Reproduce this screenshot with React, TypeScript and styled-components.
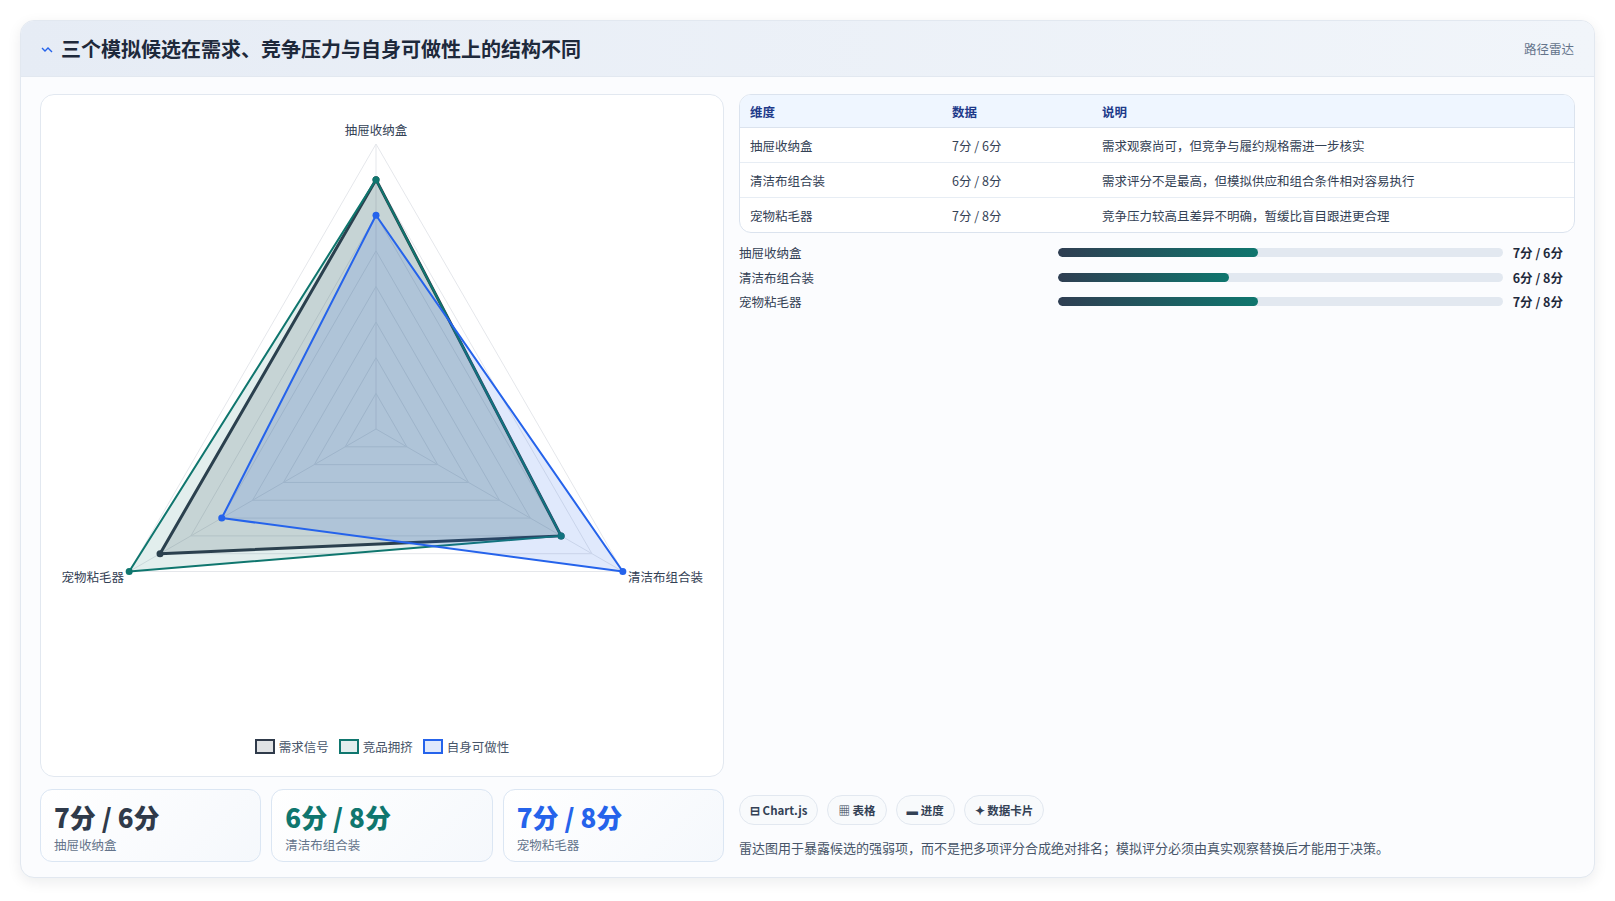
import styled, { createGlobalStyle } from "styled-components";

const GlobalStyle = createGlobalStyle`
  body {
    margin: 0;
    background: #ffffff;
    font-family: "Noto Sans CJK SC", "Noto Sans", sans-serif;
    color: #1e293b;
  }
`;

const Page = styled.div`
  padding: 20px;
  height: 901px;
  box-sizing: border-box;
`;

const Card = styled.div`
  width: 1575px;
  height: 858px;
  box-sizing: border-box;
  border: 1px solid #e2e8f0;
  border-radius: 14px;
  background: #fbfcfe;
  box-shadow: 0 4px 14px rgba(15, 23, 42, 0.08);
  display: flex;
  flex-direction: column;
  overflow: hidden;
`;

const Header = styled.div`
  height: 55px;
  flex-shrink: 0;
  display: flex;
  align-items: center;
  justify-content: space-between;
  padding: 0 20px;
  background: linear-gradient(90deg, #e6ecf5, #f1f5fa);
  border-bottom: 1px solid #e2e8f0;
`;

const Title = styled.h1`
  margin: 0;
  font-size: 20px;
  font-weight: 700;
  color: #1e293b;
  display: flex;
  align-items: center;
  gap: 8px;
`;

const Tag = styled.span`
  font-size: 12.5px;
  color: #64748b;
`;

const Body = styled.div`
  flex: 1;
  display: grid;
  grid-template-columns: 684px 1fr;
  gap: 15px;
  padding: 17px 19px 18px 19px;
`;

const Left = styled.div`
  display: flex;
  flex-direction: column;
  gap: 12px;
`;

const ChartPanel = styled.div`
  height: 683px;
  box-sizing: border-box;
  background: #fff;
  border: 1px solid #e2e8f0;
  border-radius: 14px;
  position: relative;
`;

const Legend = styled.div`
  position: absolute;
  left: 0;
  right: 0;
  bottom: 20px;
  display: flex;
  justify-content: center;
  gap: 10px;
  font-size: 12.5px;
  color: #475569;
`;

const LegendItem = styled.span`
  display: flex;
  align-items: center;
  gap: 4px;
`;

const Swatch = styled.span<{ $stroke: string; $fill: string }>`
  width: 16px;
  height: 11px;
  border: 2px solid ${(p) => p.$stroke};
  background: ${(p) => p.$fill};
`;

const Stats = styled.div`
  display: grid;
  grid-template-columns: repeat(3, 1fr);
  gap: 10px;
`;

const Stat = styled.div`
  height: 73px;
  box-sizing: border-box;
  border: 1px solid #dbe6f3;
  border-radius: 12px;
  background: linear-gradient(135deg, #ffffff, #f5f8fc);
  padding: 9px 13px;
`;

const StatValue = styled.div<{ $color: string }>`
  font-size: 26px;
  font-weight: 800;
  color: ${(p) => p.$color};
  line-height: 36px;
`;

const StatLabel = styled.div`
  font-size: 12.5px;
  color: #64748b;
`;

const Right = styled.div`
  display: flex;
  flex-direction: column;
`;

const Table = styled.table`
  width: 100%;
  border-collapse: separate;
  border-spacing: 0;
  border: 1px solid #dbe3ee;
  border-radius: 12px;
  overflow: hidden;
  font-size: 12.5px;
  background: #fff;
`;

const Th = styled.th<{ $w?: string }>`
  text-align: left;
  font-weight: 600;
  color: #1e3a8a;
  background: #eff6ff;
  height: 32px;
  padding: 0 10px;
  width: ${(p) => p.$w || "auto"};
  border-bottom: 1px solid #dbe3ee;
`;

const Td = styled.td<{ $last?: boolean }>`
  height: 34px;
  padding: 0 10px;
  color: #334155;
  border-bottom: ${(p) => (p.$last ? "none" : "1px solid #e7edf4")};
`;

const Bars = styled.div`
  margin-top: 10px;
  display: flex;
  flex-direction: column;
  gap: 6px;
`;

const BarRow = styled.div`
  display: grid;
  grid-template-columns: 319px 1fr 72px;
  align-items: center;
  height: 18.5px;
  font-size: 12.5px;
  color: #334155;
`;

const Track = styled.div`
  height: 9px;
  border-radius: 5px;
  background: #e2e8f0;
  overflow: hidden;
`;

const Fill = styled.div`
  height: 100%;
  border-radius: 5px;
  background: linear-gradient(90deg, #2f3e52, #0f766e);
`;

const BarValue = styled.span`
  text-align: right;
  font-weight: 700;
  padding-right: 12px;
  color: #1e293b;
`;

const Spacer = styled.div`
  flex: 1;
`;

const Chips = styled.div`
  display: flex;
  gap: 9px;
  margin-bottom: 13px;
`;

const Chip = styled.span`
  font-size: 11.5px;
  font-weight: 600;
  color: #334155;
  border: 1px solid #e2e8f0;
  background: #f8fafc;
  border-radius: 15px;
  padding: 6px 10px;
`;

const Note = styled.div`
  font-size: 13px;
  color: #475569;
  margin-bottom: 5px;
`;

const labels = ["抽屉收纳盒", "清洁布组合装", "宠物粘毛器"];
const datasets = [
  { name: "需求信号", stroke: "#2f3a4a", fill: "rgba(47,58,74,0.15)", data: [7, 6, 7] },
  { name: "竞品拥挤", stroke: "#0f766e", fill: "rgba(15,118,110,0.12)", data: [7, 6, 8] },
  { name: "自身可做性", stroke: "#2563eb", fill: "rgba(37,99,235,0.14)", data: [6, 8, 5] },
];

const CX = 335;
const CY = 334;
const R = 285;
const ang = [-90, 30, 150].map((a) => (a * Math.PI) / 180);
const pt = (i: number, v: number) => [CX + Math.cos(ang[i]) * (R * v) / 8, CY + Math.sin(ang[i]) * (R * v) / 8];

function Radar() {
  const rings = [1, 2, 3, 4, 5, 6, 7, 8];
  return (
    <svg width="682" height="620" style={{ display: "block" }}>
      {rings.map((r) => (
        <polygon
          key={r}
          points={[0, 1, 2].map((i) => pt(i, r).join(",")).join(" ")}
          fill="none"
          stroke="#e5e7eb"
          strokeWidth={1}
        />
      ))}
      {[0, 1, 2].map((i) => {
        const [x, y] = pt(i, 8);
        return <line key={i} x1={CX} y1={CY} x2={x} y2={y} stroke="#e5e7eb" />;
      })}
      {datasets.map((d) => (
        <g key={d.name}>
          <polygon
            points={d.data.map((v, i) => pt(i, v).join(",")).join(" ")}
            fill={d.fill}
            stroke={d.stroke}
            strokeWidth={d.name === "需求信号" ? 3 : 2}
            strokeLinejoin="round"
          />
          {d.data.map((v, i) => {
            const [x, y] = pt(i, v);
            return <circle key={i} cx={x} cy={y} r={3.5} fill={d.stroke} />;
          })}
        </g>
      ))}
      <text x={CX} y={40} textAnchor="middle" fontSize="12.5" fill="#334155">{labels[0]}
      </text>
      <text x={587} y={487} textAnchor="start" fontSize="12.5" fill="#334155">{labels[1]}</text>
      <text x={83} y={487} textAnchor="end" fontSize="12.5" fill="#334155">{labels[2]}</text>
    </svg>
  );
}

const rows = [
  { name: "抽屉收纳盒", v: "7分 / 6分", note: "需求观察尚可，但竞争与履约规格需进一步核实", pct: 45 },
  { name: "清洁布组合装", v: "6分 / 8分", note: "需求评分不是最高，但模拟供应和组合条件相对容易执行", pct: 38.5 },
  { name: "宠物粘毛器", v: "7分 / 8分", note: "竞争压力较高且差异不明确，暂缓比盲目跟进更合理", pct: 45 },
];

export default function App() {
  return (
    <Page>
      <GlobalStyle />
      <Card>
        <Header>
          <Title>
            <svg width="12" height="10" viewBox="0 0 12 10">
              <path d="M1 4 L4 7 L7 4 L11 8" stroke="#2563eb" strokeWidth="1.4" fill="none" />
            </svg>
            三个模拟候选在需求、竞争压力与自身可做性上的结构不同
          </Title>
          <Tag>路径雷达</Tag>
        </Header>
        <Body>
          <Left>
            <ChartPanel>
              <Radar />
              <Legend>
                {datasets.map((d) => (
                  <LegendItem key={d.name}>
                    <Swatch $stroke={d.stroke} $fill={d.fill} />
                    {d.name}
                  </LegendItem>
                ))}
              </Legend>
            </ChartPanel>
            <Stats>
              {rows.map((r, i) => (
                <Stat key={r.name}>
                  <StatValue $color={datasets[i].stroke}>{r.v}</StatValue>
                  <StatLabel>{r.name}</StatLabel>
                </Stat>
              ))}
            </Stats>
          </Left>
          <Right>
            <Table>
              <thead>
                <tr>
                  <Th $w="182px">维度</Th>
                  <Th $w="130px">数据</Th>
                  <Th>说明</Th>
                </tr>
              </thead>
              <tbody>
                {rows.map((r, i) => (
                  <tr key={r.name}>
                    <Td $last={i === rows.length - 1}>{r.name}</Td>
                    <Td $last={i === rows.length - 1}>{r.v}</Td>
                    <Td $last={i === rows.length - 1}>{r.note}</Td>
                  </tr>
                ))}
              </tbody>
            </Table>
            <Bars>
              {rows.map((r) => (
                <BarRow key={r.name}>
                  <span>{r.name}</span>
                  <Track>
                    <Fill style={{ width: `${r.pct}%` }} />
                  </Track>
                  <BarValue>{r.v}</BarValue>
                </BarRow>
              ))}
            </Bars>
            <Spacer />
            <Chips>
              <Chip>⊟ Chart.js</Chip>
              <Chip>▦ 表格</Chip>
              <Chip>▬ 进度</Chip>
              <Chip>✦ 数据卡片</Chip>
            </Chips>
            <Note>雷达图用于暴露候选的强弱项，而不是把多项评分合成绝对排名；模拟评分必须由真实观察替换后才能用于决策。</Note>
          </Right>
        </Body>
      </Card>
    </Page>
  );
}
